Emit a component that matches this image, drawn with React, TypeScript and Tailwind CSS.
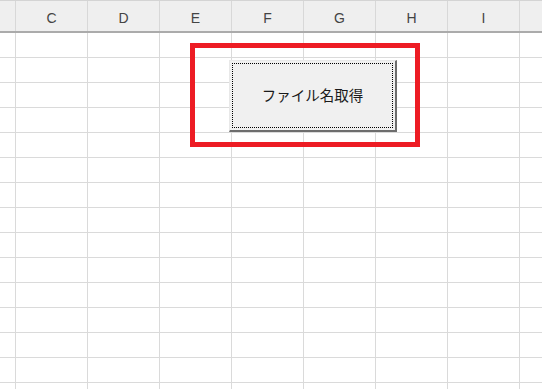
const cols = ["C", "D", "E", "F", "G", "H", "I"];
const rows = Array.from({ length: 15 }, (_, i) => i);

export default function App() {
  return (
    <div className="relative w-[542px] h-[389px] overflow-hidden bg-white font-['Liberation_Sans',sans-serif]">
      {/* column header */}
      <div className="flex h-[33px] border-t border-[#d4d4d4] border-b-2 border-b-[#ababab] bg-[#efefef]">
        <div className="w-[16px] shrink-0 border-r border-[#d8d8d8]" />
        {cols.map((c) => (
          <div
            key={c}
            className="w-[72px] shrink-0 border-r border-[#d8d8d8] flex items-center justify-center pt-[4px] text-[14px] text-[#444]"
          >
            {c}
          </div>
        ))}
        <div className="flex-1" />
      </div>

      {/* cells */}
      {rows.map((r) => (
        <div key={r} className="flex h-[25px] border-b border-[#dadada]">
          <div className="w-[16px] shrink-0 border-r border-[#dadada]" />
          {cols.map((c) => (
            <div key={c} className="w-[72px] shrink-0 border-r border-[#dadada]" />
          ))}
          <div className="flex-1" />
        </div>
      ))}

      {/* red highlight */}
      <div className="absolute left-[190px] top-[43px] w-[230px] h-[104px] border-[5px] border-[#ed1c24]" />

      {/* form button */}
      <div className="absolute left-[229px] top-[60px] w-[168px] h-[72px] bg-[#f0f0f0] border-t border-l border-[#e8e8e8] border-r-2 border-b-2 border-r-[#6d6d6d] border-b-[#6d6d6d] p-[2px]">
        <div className="w-full h-full border border-dotted border-black flex items-center justify-center pb-[1px] text-[14.5px] text-[#1a1a1a] font-['Noto_Sans_CJK_JP',sans-serif]">
          ファイル名取得
        </div>
      </div>
    </div>
  );
}
